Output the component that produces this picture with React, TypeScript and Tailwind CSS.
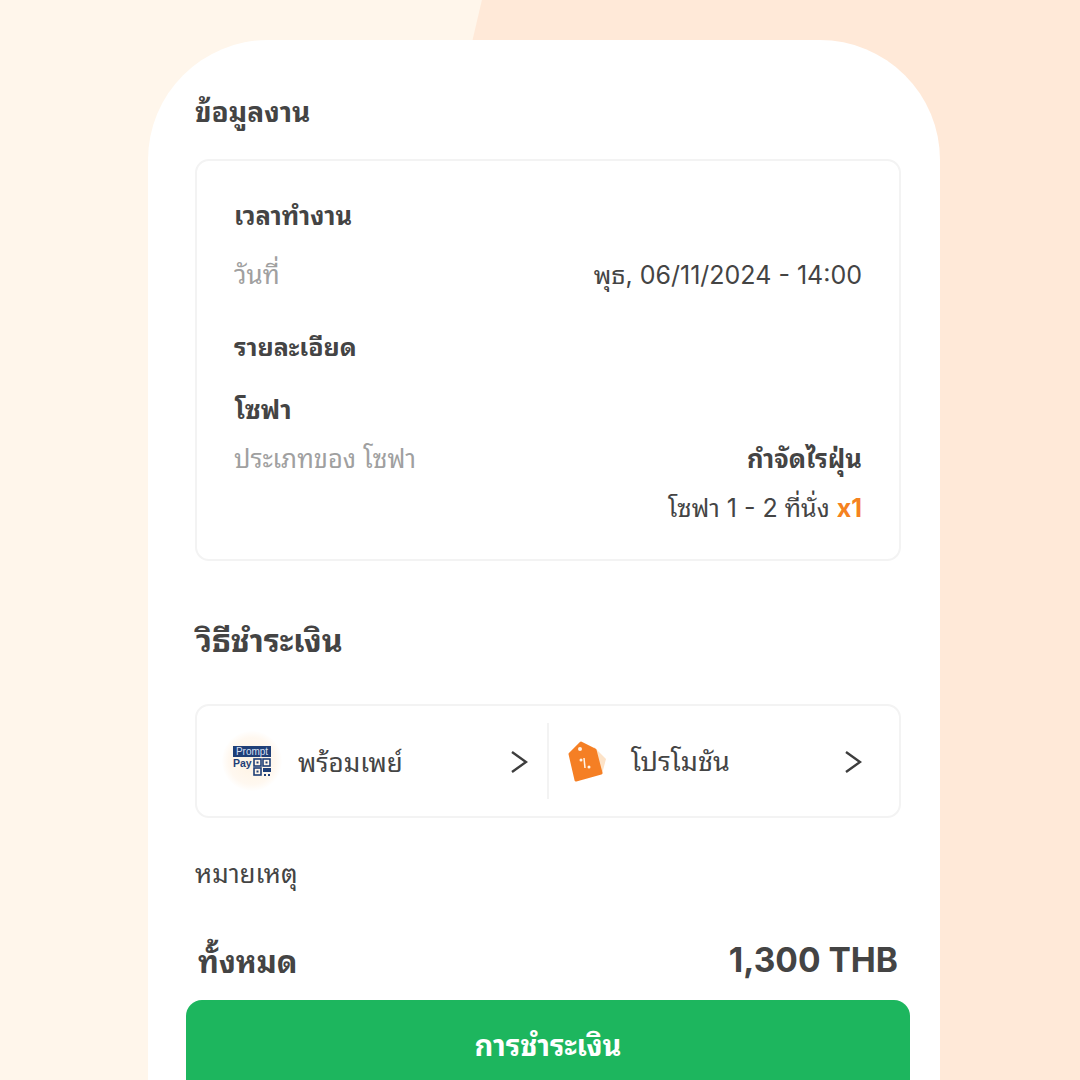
const Row = ({ children, className = "" }: { children: React.ReactNode; className?: string }) => (
  <div className={"flex justify-between items-center " + className}>{children}</div>
);

const PromptPayIcon = () => (
  <div className="w-[60px] h-[60px] rounded-full bg-[radial-gradient(circle,#fff3e2_0%,#fff8f0_55%,#ffffff_72%)] flex items-center justify-center shrink-0">
    <svg width="40" height="40" viewBox="0 0 40 40">
      <rect x="1" y="5" width="38" height="11" fill="#1f3f77" />
      <text x="20" y="14" textAnchor="middle" fontSize="10" fill="#d5dff2" fontFamily="'Liberation Sans', sans-serif">Prompt</text>
      <text x="1" y="26" fontSize="10.5" fontWeight="700" fill="#1f3f77" fontFamily="'Liberation Sans', sans-serif">Pay</text>
      <g fill="none" stroke="#1f3f77" strokeWidth="1.6">
        <rect x="22" y="18" width="7" height="7" />
        <rect x="31" y="18" width="7" height="7" />
        <rect x="22" y="27" width="7" height="7" />
      </g>
      <rect x="31" y="27" width="8" height="4" fill="#1f3f77" />
      <rect x="32" y="33" width="2" height="2" fill="#1f3f77" />
      <rect x="36" y="33" width="2" height="2" fill="#1f3f77" />
      <rect x="24.5" y="20.5" width="2" height="2" fill="#1f3f77" />
      <rect x="33.5" y="20.5" width="2" height="2" fill="#1f3f77" />
      <rect x="24.5" y="29.5" width="2" height="2" fill="#1f3f77" />
    </svg>
  </div>
);

const TagIcon = () => (
  <svg width="40" height="44" viewBox="0 0 40 44" className="shrink-0">
    <path d="M26 8 L38 20 L34 35 L28 33 Z" fill="#fde3c8" />
    <path d="M13 4 L27 11 L33 34 L8 41 L2 15 Z" fill="#f57f24" stroke="#f57f24" strokeWidth="3" strokeLinejoin="round" />
    <circle cx="12" cy="10" r="2" fill="#fff3e6" />
    <circle cx="13" cy="21" r="1.5" fill="#fff3e6" />
    <circle cx="21" cy="28" r="1.5" fill="#fff3e6" />
    <path d="M16 19 L17 29" stroke="#fff3e6" strokeWidth="1.5" />
  </svg>
);

const Chevron = () => (
  <svg width="18" height="24" viewBox="0 0 18 24" fill="none" stroke="#3d3d3d" strokeWidth="2.4" className="shrink-0 mt-[2px]">
    <path d="M2 2 L16 12 L2 22" />
  </svg>
);

export default function App() {
  const font = "font-['Inter','Noto_Sans_Thai_Looped','Loma','Tahoma','Garuda','Noto_Sans','Noto_Sans_Thai',sans-serif]";
  return (
    <div className={"relative h-[1080px] overflow-hidden bg-[#fff6eb] text-[#444444] " + font}>
      {/* blob behind the sheet */}
      <div className="absolute left-[434px] top-[-700px] w-[1400px] h-[2200px] rounded-[50%] bg-[#ffe9d8]" />

      <div className="relative ml-[148px] mt-[40px] w-[792px] h-[1040px] bg-white rounded-t-[120px] px-[47px] pt-[52px]">
        <h2 className="text-[28px] leading-[40px] font-bold">ข้อมูลงาน</h2>

        <div className="mt-[27px] w-[706px] h-[402px] border-2 border-[#f3f3f3] rounded-[14px] pl-[37px] pr-[36px] pt-[37px]">
          <div className="text-[25.5px] leading-[36px] font-bold">เวลาทำงาน</div>
          <Row className="mt-[22px] h-[40px]">
            <span className="text-[26px] text-[#a0a0a0] -mt-[4px]">วันที่</span>
            <span className="text-[25px] mr-[1px]">พุธ, 06/11/2024 - 14:00</span>
          </Row>
          <div className="mt-[33px] text-[25px] leading-[36px] font-bold">รายละเอียด</div>
          <div className="mt-[27px] pl-[1px] text-[26px] leading-[36px] font-bold">โซฟา</div>
          <Row className="mt-[11px] h-[40px]">
            <span className="text-[25.5px] text-[#a0a0a0]">ประเภทของ โซฟา</span>
            <span className="text-[25.5px] font-bold mr-[1px]">กำจัดไรฝุ่น</span>
          </Row>
          <div className="mt-[9px] mr-[1px] text-right text-[25px] leading-[40px]">
            โซฟา 1 - 2 ที่นั่ง <span className="font-bold text-[#f58220]">x1</span>
          </div>
        </div>

        <h2 className="mt-[58px] pl-[1px] text-[32px] leading-[44px] font-bold">วิธีชำระเงิน</h2>

        <div className="mt-[41px] w-[706px] h-[114px] border-2 border-[#f3f3f3] rounded-[14px] flex items-center">
          <div className="w-[350px] flex items-center pl-[25px] pr-[19px]">
            <PromptPayIcon />
            <span className="ml-[16px] text-[26px] flex-1 mt-[2px]">พร้อมเพย์</span>
            <Chevron />
          </div>
          <div className="w-[2px] h-[76px] bg-[#f3f3f3]" />
          <div className="flex-1 flex items-center pl-[19px] pr-[37px]">
            <TagIcon />
            <span className="ml-[23px] text-[27px] flex-1 mt-[2px]">โปรโมชัน</span>
            <Chevron />
          </div>
        </div>

        <div className="mt-[36px] text-[26px] leading-[40px]">หมายเหตุ</div>

        <Row className="mt-[46px] pl-[3px] pr-[3px] h-[44px] w-[706px]">
          <span className="text-[30.5px] font-bold">ทั้งหมด</span>
          <span className="text-[33.5px] font-bold -mt-[4px]">1,300 THB</span>
        </Row>

        <button className="mt-[16px] -ml-[9px] w-[724px] h-[100px] rounded-[16px] bg-[#1db65e] text-white text-[29px] font-bold pb-[8px]">
          การชำระเงิน
        </button>
      </div>
    </div>
  );
}
